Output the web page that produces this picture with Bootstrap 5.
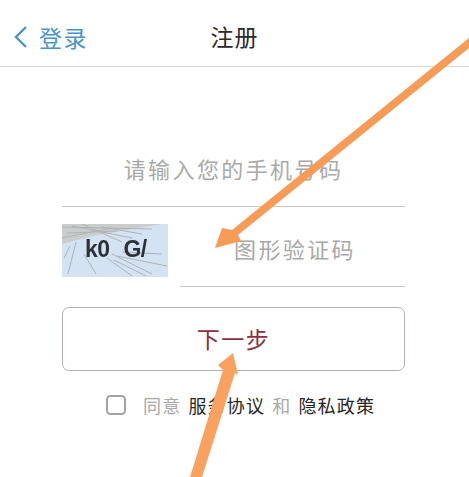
<!DOCTYPE html>
<html lang="zh">
<head>
<meta charset="utf-8">
<title>注册</title>
<link href="https://cdn.jsdelivr.net/npm/bootstrap@5.3.0/dist/css/bootstrap.min.css" rel="stylesheet">
<style>
html,body{height:477px;overflow:hidden;background:#fff}
body{position:relative;font-family:"Noto Sans CJK SC","Liberation Sans",sans-serif;color:#2b2b2b}
.topbar{height:67px;border-bottom:1px solid #d6d6d6;padding:0;position:relative}
.back-link{color:#4a94c8;font-size:23px;letter-spacing:1.5px;text-decoration:none;margin-left:13px;gap:10px;line-height:1;margin-top:8px}
.page-title{position:absolute;left:0;right:0;top:22px;text-align:center;font-size:23px;line-height:28px;color:#2b2b2b;letter-spacing:1px;margin:0;font-weight:400}
.reg-form{padding:0 64px 0 62px}
.line-input{border:0;border-bottom:1px solid #c9c9c9;border-radius:0;font-size:22px;letter-spacing:2.4px;padding:0;box-shadow:none;background:transparent;color:#333}
.line-input::placeholder{color:#a9a9a9;opacity:1}
.phone-input{height:140px;padding-top:63px;text-align:center}
.code-row{margin-top:17px;gap:12px;height:63px}
.captcha-box{width:106px;height:53px;flex:none;background:#d3e3f3;position:relative;overflow:hidden}
.captcha-box svg{position:absolute;inset:0;filter:blur(.6px)}
.captcha-text{position:absolute;left:23px;top:9px;font:700 23px/32px "Liberation Sans",sans-serif;color:#2c3138;letter-spacing:-.5px;word-spacing:8px;filter:blur(.5px)}
.code-input{height:63px;padding-left:54px;padding-bottom:14px}
.next-btn{margin-top:20px;height:64px;width:100%;border:1px solid #b5afae;border-radius:7px;background:#fff;color:#8a3040;font-size:23px;letter-spacing:1.5px;padding:0 0 2px}
.agree-row{margin-top:22px;padding-left:44px;font-size:18px;line-height:24px;letter-spacing:1.2px;white-space:nowrap}
.agree-box{width:20px;height:20px;margin:0 17px 0 0;border:2px solid #a2a2a2;border-radius:4px;float:none;flex:none}
.muted-word{color:#a8a8a8}
.term-word{color:#262626}
.gap-a{margin-left:7px}
.arrows{position:absolute;left:0;top:0;pointer-events:none}
</style>
</head>
<body>
<nav class="navbar topbar align-items-center justify-content-start">
  <a class="back-link d-flex align-items-center" href="#">
    <svg width="16" height="24" viewBox="0 0 16 24"><path d="M13 2 L3 12 L13 22" fill="none" stroke="#4a94c8" stroke-width="2.4"/></svg>
    <span>登录</span>
  </a>
  <h1 class="page-title">注册</h1>
</nav>
<form class="reg-form">
  <input class="form-control line-input phone-input" type="text" placeholder="请输入您的手机号码">
  <div class="d-flex code-row">
    <div class="captcha-box">
      <svg width="106" height="53" viewBox="0 0 106 53">
        <path d="M0 0H100L70 5 30 12 0 20Z" fill="#c9cdcd"/>
        <g stroke="#aeb3b5" stroke-width="1" fill="none">
          <path d="M0 3L90 5M10 2L70 14M20 0L60 18M40 3L80 10M5 9L55 7M0 14L50 4"/>
          <path d="M50 30L90 50M55 32L105 42M45 34L70 52M60 28L100 30M52 36L84 52"/>
          <path d="M14 18L6 50M22 30L34 50M8 22L2 34"/>
        </g>
      </svg>
      <span class="captcha-text">k0 G/</span>
    </div>
    <input class="form-control line-input code-input" type="text" placeholder="图形验证码">
  </div>
  <button class="btn next-btn" type="button">下一步</button>
  <div class="d-flex align-items-center agree-row">
    <input class="form-check-input agree-box" type="checkbox">
    <span class="muted-word">同意</span>
    <span class="term-word gap-a">服务协议</span>
    <span class="muted-word gap-a">和</span>
    <span class="term-word gap-a">隐私政策</span>
  </div>
</form>
<svg class="arrows" width="469" height="477" viewBox="0 0 469 477">
  <path d="M469 38 L232 230 L222 228 L215 248 L241 241 L238 235 L469 48 Z" fill="#f79b57"/>
  <path d="M190 477 L202 477 L235 373 L238 375 L233 353 L218 365 L223 370 Z" fill="#f9a260"/>
</svg>
</body>
</html>
